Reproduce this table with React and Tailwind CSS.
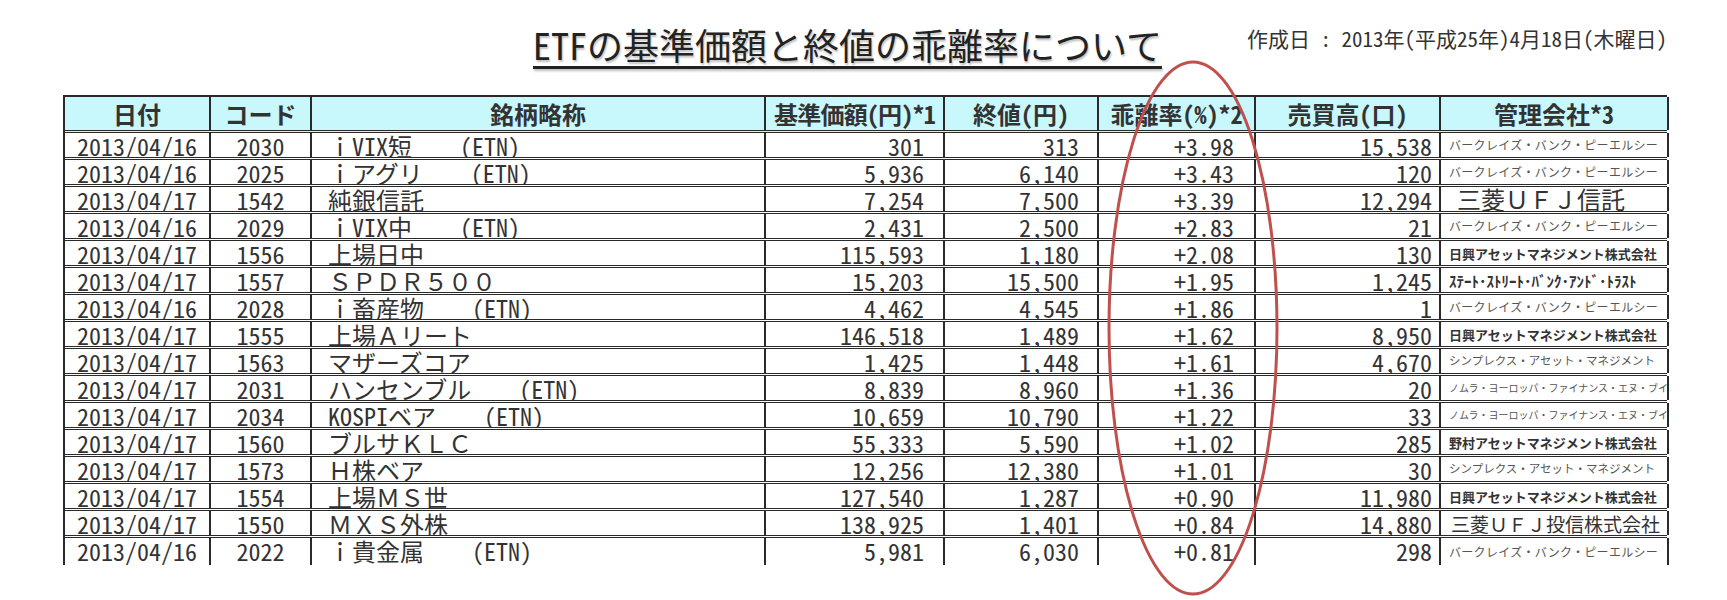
const cols = "grid grid-cols-[146px_101px_454px_179px_154px_157px_185px_228px]";

const companies = {
  b: { text: "バークレイズ・バンク・ピーエルシー", cls: "text-[12px] text-[#555] tracking-[0.3px]" },
  n: { text: "日興アセットマネジメント株式会社", cls: "text-[13px] font-bold text-[#333]" },
  s: { text: "ｽﾃｰﾄ･ｽﾄﾘｰﾄ･ﾊﾞﾝｸ･ｱﾝﾄﾞ･ﾄﾗｽﾄ", cls: "text-[15px] font-bold text-[#333]" },
  sp: { text: "シンプレクス・アセット・マネジメント", cls: "text-[11.5px] text-[#555]" },
  nm: { text: "ノムラ・ヨーロッパ・ファイナンス・エヌ・ブイ", cls: "text-[10px] text-[#555]" },
  no: { text: "野村アセットマネジメント株式会社", cls: "text-[13px] font-bold text-[#333]" },
  mt: { text: "三菱ＵＦＪ信託", cls: "text-[24px] pl-[16px] text-[#333]" },
  mi: { text: "三菱ＵＦＪ投信株式会社", cls: "text-[19px] pl-[10px] text-[#333]" },
};

const rows = [
  ["2013/04/16", "2030", "ｉVIX短　　(ETN)", "301", "313", "+3.98", "15,538", "b"],
  ["2013/04/16", "2025", "ｉアグリ　　(ETN)", "5,936", "6,140", "+3.43", "120", "b"],
  ["2013/04/17", "1542", "純銀信託", "7,254", "7,500", "+3.39", "12,294", "mt"],
  ["2013/04/16", "2029", "ｉVIX中　　(ETN)", "2,431", "2,500", "+2.83", "21", "b"],
  ["2013/04/17", "1556", "上場日中", "115,593", "1,180", "+2.08", "130", "n"],
  ["2013/04/17", "1557", "ＳＰＤＲ５００", "15,203", "15,500", "+1.95", "1,245", "s"],
  ["2013/04/16", "2028", "ｉ畜産物　　(ETN)", "4,462", "4,545", "+1.86", "1", "b"],
  ["2013/04/17", "1555", "上場Ａリート", "146,518", "1,489", "+1.62", "8,950", "n"],
  ["2013/04/17", "1563", "マザーズコア", "1,425", "1,448", "+1.61", "4,670", "sp"],
  ["2013/04/17", "2031", "ハンセンブル　　(ETN)", "8,839", "8,960", "+1.36", "20", "nm"],
  ["2013/04/17", "2034", "KOSPIベア　　(ETN)", "10,659", "10,790", "+1.22", "33", "nm"],
  ["2013/04/17", "1560", "ブルサＫＬＣ", "55,333", "5,590", "+1.02", "285", "no"],
  ["2013/04/17", "1573", "Ｈ株ベア", "12,256", "12,380", "+1.01", "30", "sp"],
  ["2013/04/17", "1554", "上場ＭＳ世", "127,540", "1,287", "+0.90", "11,980", "n"],
  ["2013/04/17", "1550", "ＭＸＳ外株", "138,925", "1,401", "+0.84", "14,880", "mi"],
  ["2013/04/16", "2022", "ｉ貴金属　　(ETN)", "5,981", "6,030", "+0.81", "298", "b"],
];

const hw = "[font-feature-settings:'hwid']";
const cell = "border-r-2 border-[#2a2a2a] overflow-hidden whitespace-pre";

// half-width forms only for the ASCII runs, full-width letters stay wide
function Mixed({ text }) {
  return text.split(/([\x20-\x7e]+)/).map((part, i) =>
    /^[\x20-\x7e]+$/.test(part) ? (
      <span key={i} className={hw}>{part}</span>
    ) : (
      <span key={i}>{part}</span>
    )
  );
}

function HeaderRow() {
  const heads = ["日付", "コード", "銘柄略称", "基準価額(円)*1", "終値(円)", "乖離率(%)*2", "売買高(口)", "管理会社*3"];
  return (
    <div className={`${cols} h-[38px] bg-[#c8f7fc] border-t-2 border-b-[3px] border-double border-[#2a2a2a]`}>
      {heads.map((h, i) => (
        <div
          key={h}
          className={`${cell} ${hw} flex items-center justify-center text-[24px] leading-[30px] font-bold text-[#333] ${i === 3 ? "tracking-[-0.8px]" : ""}`}
        >
          {h}
        </div>
      ))}
    </div>
  );
}

function DataRow({ r, last }) {
  const co = companies[r[7]];
  return (
    <div className={`${cols} h-[27px] ${last ? "" : "border-b-[3px] border-double border-[#2a2a2a]"} text-[24px] leading-[24px] text-[#333]`}>
      <div className={`${cell} ${hw} pt-[1px] text-center`}>{r[0]}</div>
      <div className={`${cell} ${hw} pt-[1px] text-center`}>{r[1]}</div>
      <div className={`${cell} pt-[1px] pl-[16px]`}><Mixed text={r[2]} /></div>
      <div className={`${cell} ${hw} pt-[1px] text-right pr-[19px]`}>{r[3]}</div>
      <div className={`${cell} ${hw} pt-[1px] text-right pr-[18px]`}>{r[4]}</div>
      <div className={`${cell} ${hw} pt-[1px] text-right pr-[20px]`}>{r[5]}</div>
      <div className={`${cell} ${hw} pt-[1px] text-right pr-[7px]`}>{r[6]}</div>
      <div className={`${cell} flex items-center pl-[8px] leading-none ${co.cls}`}>{co.text}</div>
    </div>
  );
}

export default function App() {
  return (
    <div className="relative w-[1727px] h-[600px] overflow-hidden bg-white font-['Noto_Sans_CJK_JP',sans-serif] pt-[24px] pl-[63px] pr-[60px]">
      <div className="flex items-start h-[40px]">
        <h1 className={`ml-[470px] ${hw} text-[36px] leading-[40px] text-[#222] underline decoration-[3px] underline-offset-[6px] [text-shadow:1px_2px_2px_rgba(0,0,0,0.25)]`}>
          ETFの基準価額と終値の乖離率について
        </h1>
        <div className={`ml-auto mt-[1px] ${hw} text-[21px] leading-[26px] text-[#333] whitespace-pre`}>
          作成日　:　2013年(平成25年)4月18日(木曜日)
        </div>
      </div>

      <div className="mt-[31px] border-l-2 border-[#2a2a2a] w-[1604px]">
        <HeaderRow />
        {rows.map((r, i) => (
          <DataRow key={i} r={r} last={i === rows.length - 1} />
        ))}
      </div>

      <svg className="absolute inset-0 pointer-events-none" width="1727" height="600" viewBox="0 0 1727 600">
        <ellipse cx="1193" cy="328" rx="84" ry="266" fill="none" stroke="#c0504d" strokeWidth="3" />
      </svg>
    </div>
  );
}
